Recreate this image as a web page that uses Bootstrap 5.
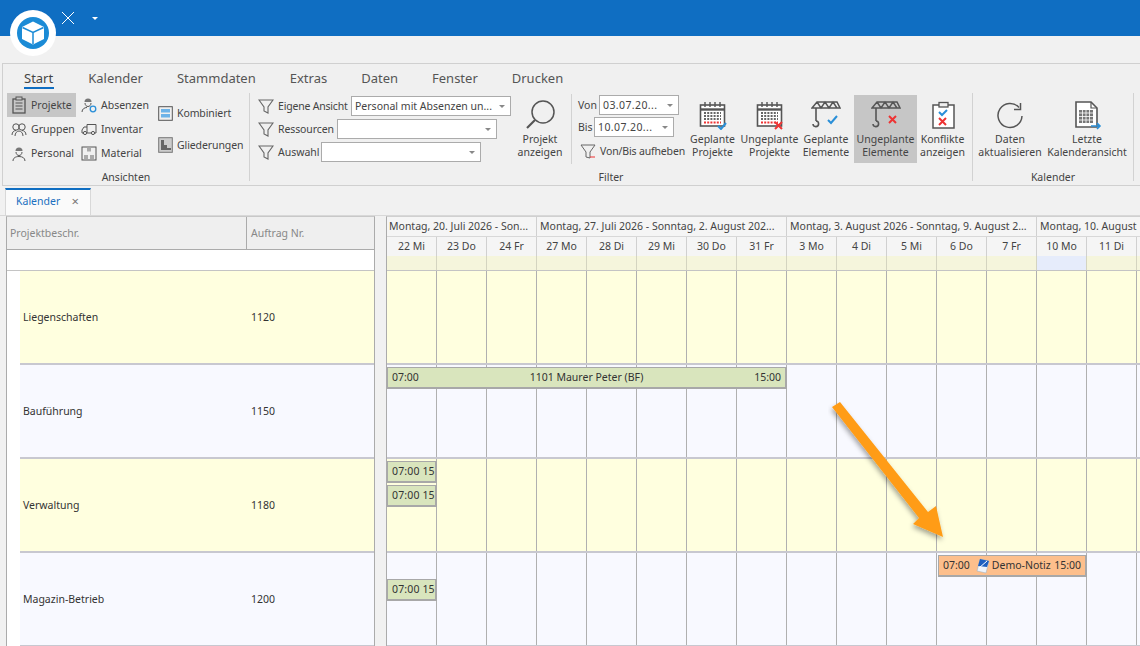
<!DOCTYPE html>
<html lang="de">
<head>
<meta charset="UTF-8">
<title>Kalender</title>
<link href="https://cdn.jsdelivr.net/npm/bootstrap@5.3.0/dist/css/bootstrap.min.css" rel="stylesheet">
<style>
  html, body { height: 646px; overflow: hidden; }
  body { font-family: "Noto Sans", "Open Sans", sans-serif; font-size: 10.5px; line-height: 13px; color: #444; background: #f1f1f1; }
  svg { display: block; flex: none; }
  .topbar { height: 36px; background: #0f6ec2; }
  .logo-round { left: 10px; top: 10px; width: 46px; height: 46px; background: #fff; border-radius: 50%; z-index: 5; }
  .top-x { left: 61px; top: 11px; }
  .top-caret { left: 92px; top: 17px; width: 0; height: 0; border: 3px solid transparent; border-top-color: #fff; }
  .ribbon-zone { height: 150px; padding: 27px 0 0 2px; }
  .ribbon { height: 123px; border: 1px solid #d0d0d0; border-right: 0; background: #f0f0f0; }
  .rtabs { height: 29px; padding: 5px 0 0 21px; gap: 34px; font-size: 13px; line-height: 18px; color: #555; }
  .rtabs span { height: 20px; }
  .rtabs .on { border-bottom: 2px solid #0f6ec2; color: #444; padding-right: 1px; }
  .groups { height: 91px; }
  .rgroup { border-right: 1px solid #d2d2d2; height: 88px; position: relative; }
  .grp-a { width: 247px; padding-left: 4px; }
  .grp-b { width: 723px; }
  .grp-c { width: 161px; padding-left: 2px; }
  .grp-name { position: absolute; bottom: -3px; left: 0; right: 0; text-align: center; }
  .scol { width: 72px; }
  .sbtn { height: 24px; gap: 4px; padding-left: 4px; white-space: nowrap; }
  .sbtn.sel { background: #c6c6c6; margin-right: 3px; }
  .scol-b .sbtn { padding-left: 2px; }
  .scol-wide { width: 90px; margin-left: 3px; padding-top: 8px; gap: 8px; }
  .scol-wide span { letter-spacing: -.1px; }
  .filter-box { width: 262px; padding: 3px 0 0 8px; gap: 3px; }
  .frow { height: 20px; gap: 4px; white-space: nowrap; }
  .fl-1 { width: 72px; letter-spacing: -.2px; } .fl-2 { width: 58px; letter-spacing: -.1px; } .fl-3 { width: 42px; }
  .fl-von { width: 21px; } .fl-bis { width: 16px; }
  .frow .fl-1, .frow .fl-2, .frow .fl-3 { margin-right: -3px; }
  .frow .fl-von, .frow .fl-bis { margin-right: -4px; }
  .combo { height: 20px; flex: none; background: #fff; border: 1px solid #ababab; padding: 0 3px; white-space: nowrap; overflow: hidden; position: relative; width: 160px; line-height: 18px; font-size: 10.5px; }
  .combo::after { content: ""; position: absolute; right: 5px; top: 8px; border: 3px solid transparent; border-top-color: #888; }
  .combo-date { width: 80px; letter-spacing: .4px; }
  .lbtn { height: 68px; margin-top: 2px; padding-top: 5px; text-align: center; white-space: nowrap; }
  .lbtn svg { margin-bottom: 3px; }
  .lbtn.sel { background: #c6c6c6; }
  .w-anz { width: 56px; } .w-gp { width: 57px; } .w-up { width: 57px; } .w-ge { width: 56px; } .w-ue { width: 63px; } .w-ko { width: 51px; }
  .w-dat { width: 70px; } .w-let { width: 84px; }
  .sep-v { width: 1px; height: 70px; background: #d2d2d2; margin: 1px 6px 0 3px; }
  .date-box { width: 106px; gap: 2px; padding-top: 2px; }
  .rlabel-b { margin-top: 2px; }
  .rlabel-b svg { margin-left: 2px; }
  .rlabel-b span { letter-spacing: -.15px; }
  .tabbar { height: 30px; border-bottom: 1px solid #d8d8d8; padding-left: 5px; background: #f1f1f1; }
  .doc-tab { width: 86px; height: 27px; background: #fafafa; border: 1px solid #d8d8d8; border-top: 2px solid #0f6ec2; border-bottom: 0; color: #1a70c0; padding: 0 11px 2px 10px; }
  .doc-tab b { font-weight: 400; color: #777; font-size: 13px; }
  .work { height: 430px; padding-left: 6px; background: #f1f1f1; gap: 11px; }
  .left-pane { width: 369px; flex: none; border: 1px solid #ababab; border-bottom: 0; border-top-color: #c8c8c8; background: #fff; }
  .left-head { height: 33px; background: #efefef; border-bottom: 1px solid #ababab; color: #888; }
  .left-head > div:first-child { width: 240px; border-right: 1px solid #ababab; padding-left: 3px; }
  .left-head > div:last-child { padding-left: 4px; }
  .left-blank { height: 21px; border-bottom: 1px solid #c4c4c4; }
  .left-row { height: 94px; margin-left: 13px; border-bottom: 2px solid #c8c8d0; }
  .left-row > div:first-child { width: 231px; padding-left: 3px; color: #333; }
  .left-row > div:last-child { color: #333; }
  .tint-y { background: #ffffdf; }
  .tint-b { background: #f8f9ff; }
  .chart { width: 754px; border-left: 1px solid #ababab; border-top: 1px solid #d0d0d0; background: #f8f9ff; overflow: hidden; flex: none; }
  .gridline { display: grid; grid-template-columns: repeat(15, 50px) 4px; }
  .wk-row { height: 20px; background: #f5f5f5; border-bottom: 1px solid #d8d8d8; display: flex; color: #444; }
  .wk-row > div { padding-left: 2px; border-right: 1px solid #d0d0d0; white-space: nowrap; overflow: hidden; line-height: 19px; flex: none; }
  .wk-1 { width: 150px; } .wk-2, .wk-3 { width: 250px; } .wk-4 { width: 104px; border-right: 0 !important; }
  .wk-2, .wk-3, .wk-4 { padding-left: 3px !important; }
  .day-row { height: 19px; background: #f5f5f5; }
  .day-row > div { border-right: 1px solid #d0d0d0; text-align: center; line-height: 18px; }
  .strip-row { height: 15px; background: #f5f5dc; border-bottom: 1px solid #c4c4c4; }
  .strip-row > div { border-right: 1px solid #d4d4c0; }
  .strip-row .today { background: #e6ecfb; }
  .body-row { height: 94px; border-bottom: 2px solid #c8c8d0; position: relative; }
  .body-row .vcell { grid-row: 1 / 4; border-right: 1px solid #b0b0b0; }
  .bar { background: #d9e5bd; border: 1px solid #a8a8a8; border-width: 1px 2px 2px 1px; height: 22px; padding: 0 3px 0 2px; color: #333; line-height: 19px; overflow: hidden; white-space: nowrap; z-index: 1; }
  .bar-short { padding-right: 4px; letter-spacing: .15px; }
  .bar-note { background: #fdbf8c; margin-left: 1px; padding: 0 4px; }
  .note-icon { margin: 0 2px 0 6px; }
  .arrow-over { left: 828px; top: 398px; z-index: 4; }
</style>
</head>
<body class="position-relative">

<svg width="0" height="0" class="position-absolute">
  <symbol id="i-funnel" viewBox="0 0 16 16"><path d="M1 2h14L10 9v6l-4-2V9z" fill="none" stroke="#666" stroke-width="1.1"/></symbol>
  <symbol id="i-cal" viewBox="0 0 30 30">
    <rect x="2.500" y="5" width="24" height="21" fill="#fff" stroke="#555" stroke-width="1.600"/>
    <path d="M2.500 9.500h24" stroke="#555" stroke-width="2.400"/>
    <path d="M7 2v5M12 2v5M17 2v5M22 2v5" stroke="#555" stroke-width="1.400"/>
    <path d="M6 13h17M6 16h17M6 19h17" stroke="#666" stroke-width="1.800" stroke-dasharray="2 1.200"/>
    <path d="M6 22.500h17" stroke="#e33" stroke-width="1.800" stroke-dasharray="2 1.200"/>
  </symbol>
  <symbol id="i-crane" viewBox="0 0 30 30">
    <path d="M1 8 6 2h20l3 6zM6 2l4 6 4-6 4 6 4-6 4 6" fill="none" stroke="#555" stroke-width="1.500"/>
    <path d="M5 8v13" stroke="#555" stroke-width="1.600"/>
    <path d="M5 21a2.800 2.800 0 1 1-3 3" fill="none" stroke="#555" stroke-width="1.600"/>
  </symbol>
</svg>

<div class="topbar"></div>
<div class="logo-round position-absolute d-flex align-items-center justify-content-center">
  <svg width="32" height="32" viewBox="0 0 32 32">
    <circle cx="16" cy="16" r="16" fill="#1b8bd6"/>
    <path d="M16 4.500 27 10v12l-11 5.500L5 22V10z" fill="#fff"/>
    <path d="M5.500 10.500 16 15.500l10.500-5M16 15.500V27" fill="none" stroke="#1b8bd6" stroke-width="1.500"/>
  </svg>
</div>
<svg class="top-x position-absolute" width="14" height="14" viewBox="0 0 14 14"><path d="M1 1l12 12M13 1 1 13" stroke="#fff" stroke-width="1"/></svg>
<div class="top-caret position-absolute"></div>

<div class="ribbon-zone">
  <div class="ribbon">
    <div class="rtabs d-flex">
      <span class="on">Start</span><span>Kalender</span><span>Stammdaten</span><span>Extras</span><span>Daten</span><span>Fenster</span><span>Drucken</span>
    </div>
    <div class="groups d-flex">
      <!-- Ansichten -->
      <div class="rgroup grp-a d-flex">
        <div class="scol">
          <div class="sbtn sel d-flex align-items-center">
            <svg width="16" height="18" viewBox="0 0 16 18"><rect x="2" y="3" width="12" height="14" fill="none" stroke="#555" stroke-width="1.300"/><rect x="5" y="1" width="6" height="3" fill="#c6c6c6" stroke="#555"/><path d="M4.500 7h7M4.500 10h7M4.500 13h7" stroke="#555"/></svg>
            <span>Projekte</span>
          </div>
          <div class="sbtn d-flex align-items-center">
            <svg width="16" height="16" viewBox="0 0 16 16"><circle cx="5" cy="6" r="3.200" fill="none" stroke="#555"/><circle cx="11" cy="6" r="3.200" fill="none" stroke="#555"/><path d="M1 14c0-3 2-4.500 4-4.500M15 14c0-3-2-4.500-4-4.500M4 15c0-3 2-5 4-5s4 2 4 5" fill="none" stroke="#555"/></svg>
            <span>Gruppen</span>
          </div>
          <div class="sbtn d-flex align-items-center">
            <svg width="16" height="16" viewBox="0 0 16 16"><path d="M4.500 6a3.500 3.500 0 0 1 7 0z" fill="#777"/><path d="M5 7c0 2 1.300 3.500 3 3.500S11 9 11 7" fill="none" stroke="#555"/><path d="M2 16c0-3 2.500-4.500 6-4.500S14 13 14 16" fill="none" stroke="#555"/></svg>
            <span>Personal</span>
          </div>
        </div>
        <div class="scol scol-b">
          <div class="sbtn d-flex align-items-center">
            <svg width="16" height="18" viewBox="0 0 16 18"><path d="M3.500 6a3.500 3.500 0 0 1 7 0z" fill="#777"/><path d="M4 7c0 2 1.300 3.500 3 3.500S10 9 10 7" fill="none" stroke="#555"/><path d="M1 16c0-3 2.500-4.500 5-4.500" fill="none" stroke="#555"/><circle cx="12" cy="13" r="2.800" fill="none" stroke="#2a8fd8" stroke-width="1.300"/></svg>
            <span>Absenzen</span>
          </div>
          <div class="sbtn d-flex align-items-center">
            <svg width="16" height="14" viewBox="0 0 16 14"><path d="M6 2.500h9v8.500H6zM6 5H3l-2 3v3h3" fill="none" stroke="#555"/><circle cx="4" cy="11" r="1.600" fill="#f0f0f0" stroke="#555"/><circle cx="12" cy="11" r="1.600" fill="#f0f0f0" stroke="#555"/></svg>
            <span>Inventar</span>
          </div>
          <div class="sbtn d-flex align-items-center">
            <svg width="16" height="15" viewBox="0 0 16 15"><rect x="1" y="1" width="14" height="13" fill="none" stroke="#555"/><path d="M6 1.500h4v4H6zM3 9h4v4H3zM9 9h4v4H9z" fill="#aaa"/></svg>
            <span>Material</span>
          </div>
        </div>
        <div class="scol-wide d-flex flex-column">
          <div class="sbtn d-flex align-items-center">
            <svg width="15" height="15" viewBox="0 0 15 15"><rect x=".7" y=".7" width="13.600" height="13.600" fill="none" stroke="#555"/><rect x="3" y="3" width="9" height="3.500" fill="#6db3e8"/><rect x="3" y="8" width="9" height="3.500" fill="#6db3e8"/></svg>
            <span>Kombiniert</span>
          </div>
          <div class="sbtn d-flex align-items-center">
            <svg width="15" height="16" viewBox="0 0 15 16"><rect x=".7" y=".7" width="13.600" height="14.600" fill="#ccc" stroke="#777"/><path d="M3 3v10h10v-2H9V8H6V3z" fill="#666"/></svg>
            <span>Gliederungen</span>
          </div>
        </div>
        <div class="grp-name">Ansichten</div>
      </div>

      <!-- Filter -->
      <div class="rgroup grp-b d-flex">
        <div class="filter-box d-flex flex-column">
          <div class="frow d-flex align-items-center"><svg width="16" height="16"><use href="#i-funnel"/></svg><span class="fl-1">Eigene Ansicht</span><div class="combo">Personal mit Absenzen un...</div></div>
          <div class="frow d-flex align-items-center"><svg width="16" height="16"><use href="#i-funnel"/></svg><span class="fl-2">Ressourcen</span><div class="combo"></div></div>
          <div class="frow d-flex align-items-center"><svg width="16" height="16"><use href="#i-funnel"/></svg><span class="fl-3">Auswahl</span><div class="combo"></div></div>
        </div>
        <div class="lbtn w-anz d-flex flex-column align-items-center">
          <svg width="30" height="30" viewBox="0 0 30 30"><circle cx="18" cy="12" r="11" fill="none" stroke="#555" stroke-width="1.500"/><path d="M10 20 2 28" stroke="#555" stroke-width="2.200"/></svg>
          <span>Projekt<br>anzeigen</span>
        </div>
        <div class="sep-v"></div>
        <div class="date-box d-flex flex-column">
          <div class="frow d-flex align-items-center"><span class="fl-von">Von</span><div class="combo combo-date">03.07.20...</div></div>
          <div class="frow d-flex align-items-center"><span class="fl-bis">Bis</span><div class="combo combo-date">10.07.20...</div></div>
          <div class="frow d-flex align-items-center rlabel-b">
            <svg width="16" height="16" viewBox="0 0 16 16"><path d="M1 2h14L10 9v6l-4-1V9z" fill="none" stroke="#666"/><path d="M10 14h5" stroke="#e33"/></svg>
            <span>Von/Bis aufheben</span>
          </div>
        </div>
        <div class="lbtn w-gp d-flex flex-column align-items-center">
          <svg width="30" height="30" viewBox="0 0 30 30"><use href="#i-cal"/><path d="M20 26l3 3 5-6" fill="none" stroke="#2a8fd8" stroke-width="2"/></svg>
          <span>Geplante<br>Projekte</span>
        </div>
        <div class="lbtn w-up d-flex flex-column align-items-center">
          <svg width="30" height="30" viewBox="0 0 30 30"><use href="#i-cal"/><path d="M20 22l7 7M27 22l-7 7" stroke="#e33" stroke-width="2"/></svg>
          <span>Ungeplante<br>Projekte</span>
        </div>
        <div class="lbtn w-ge d-flex flex-column align-items-center">
          <svg width="30" height="30" viewBox="0 0 30 30"><use href="#i-crane"/><path d="M17 20l3 3 6-7" fill="none" stroke="#2a8fd8" stroke-width="2"/></svg>
          <span>Geplante<br>Elemente</span>
        </div>
        <div class="lbtn w-ue sel d-flex flex-column align-items-center">
          <svg width="30" height="30" viewBox="0 0 30 30"><use href="#i-crane"/><path d="M18 16l7 7M25 16l-7 7" stroke="#e33" stroke-width="2"/></svg>
          <span>Ungeplante<br>Elemente</span>
        </div>
        <div class="lbtn w-ko d-flex flex-column align-items-center">
          <svg width="30" height="30" viewBox="0 0 30 30"><rect x="5" y="5" width="21" height="23" fill="#fff" stroke="#555" stroke-width="1.500"/><rect x="11" y="2.500" width="9" height="4.500" fill="#f0f0f0" stroke="#555" stroke-width="1.300"/><path d="M11 12l3 3 5-5" fill="none" stroke="#2a8fd8" stroke-width="2"/><path d="M11 18l7 7M18 18l-7 7" stroke="#e33" stroke-width="2"/></svg>
          <span>Konflikte<br>anzeigen</span>
        </div>
        <div class="grp-name">Filter</div>
      </div>

      <!-- Kalender -->
      <div class="rgroup grp-c d-flex">
        <div class="lbtn w-dat d-flex flex-column align-items-center">
          <svg width="30" height="30" viewBox="0 0 30 30"><path d="M24 7.500a12 12 0 1 0 3 8.500" fill="none" stroke="#555" stroke-width="1.500"/><path d="M25.500 3v6.500H19" fill="none" stroke="#555" stroke-width="1.500"/></svg>
          <span>Daten<br>aktualisieren</span>
        </div>
        <div class="lbtn w-let d-flex flex-column align-items-center">
          <svg width="30" height="30" viewBox="0 0 30 30"><path d="M4 2h15l6 6v19H4z" fill="#fff" stroke="#555" stroke-width="1.600"/><path d="M19 2v6h6" fill="none" stroke="#555" stroke-width="1.200"/><path d="M7 10h14v13H7z" fill="#777"/><path d="M7 13h14M7 16.500h14M7 20h14M10.500 10v13M14 10v13M17.500 10v13" stroke="#fff" stroke-width=".8"/><path d="M19 26h9M25 23l3 3-3 3" fill="none" stroke="#2a8fd8" stroke-width="1.600"/></svg>
          <span>Letzte<br>Kalenderansicht</span>
        </div>
        <div class="grp-name">Kalender</div>
      </div>
    </div>
  </div>
</div>

<div class="tabbar d-flex align-items-end">
  <div class="doc-tab d-flex align-items-center justify-content-between"><span>Kalender</span><b>×</b></div>
</div>

<div class="work d-flex">
  <div class="left-pane">
    <div class="left-head d-flex">
      <div class="d-flex align-items-center">Projektbeschr.</div>
      <div class="d-flex align-items-center">Auftrag Nr.</div>
    </div>
    <div class="left-blank"></div>
    <div class="left-row tint-y d-flex align-items-center"><div>Liegenschaften</div><div>1120</div></div>
    <div class="left-row tint-b d-flex align-items-center"><div>Bauführung</div><div>1150</div></div>
    <div class="left-row tint-y d-flex align-items-center"><div>Verwaltung</div><div>1180</div></div>
    <div class="left-row tint-b d-flex align-items-center"><div>Magazin-Betrieb</div><div>1200</div></div>
  </div>

  <div class="chart">
    <div class="wk-row">
      <div class="wk-1">Montag, 20. Juli 2026 - Son...</div>
      <div class="wk-2">Montag, 27. Juli 2026 - Sonntag, 2. August 202...</div>
      <div class="wk-3">Montag, 3. August 2026 - Sonntag, 9. August 2...</div>
      <div class="wk-4">Montag, 10. August</div>
    </div>
    <div class="day-row gridline" id="tage"></div>
    <div class="strip-row gridline" id="streifen"></div>
    <div class="body-row tint-y gridline" data-zeile="0"></div>
    <div class="body-row tint-b gridline" data-zeile="1"></div>
    <div class="body-row tint-y gridline" data-zeile="2"></div>
    <div class="body-row tint-b gridline" data-zeile="3"></div>
  </div>
</div>

<!-- Pfeil liegt über dem Kalender -->
<svg class="arrow-over position-absolute" width="125" height="150" viewBox="0 0 125 150">
  <defs><filter id="schatten" x="-20%" y="-20%" width="150%" height="150%"><feDropShadow dx="-1" dy="3" stdDeviation="2.500" flood-color="#000" flood-opacity=".35"/></filter></defs>
  <path d="M12 4 100 114 108 108 115 139 85 126 91 120 4 9z" fill="#ff9c17" filter="url(#schatten)"/>
</svg>

<script src="https://cdn.jsdelivr.net/npm/bootstrap@5.3.0/dist/js/bootstrap.bundle.min.js"></script>
<script>
  // Tageszellen und Termine aus Daten aufbauen
  const tage = ["22 Mi","23 Do","24 Fr","27 Mo","28 Di","29 Mi","30 Do","31 Fr","3 Mo","4 Di","5 Mi","6 Do","7 Fr","10 Mo","11 Di"];
  document.getElementById("tage").innerHTML = tage.map(t => `<div>${t}</div>`).join("");
  document.getElementById("streifen").innerHTML = tage.map(t => `<div class="${t === "10 Mo" ? "today" : ""}"></div>`).join("");

  const notizIcon = `<svg class="note-icon" width="14" height="16" viewBox="0 0 14 16"><path d="M4 1 13 3 10 15 1 13z" fill="#eef3fa" stroke="#9ab" stroke-width=".5"/><path d="M4 1 13 3 11 9 2 8z" fill="#1d5fc0"/><path d="M3 10 11 3" stroke="#fff" stroke-width="1"/></svg>`;
  const termine = [
    [],
    [{ von: 1, bis: 9, zeile: 1, cls: "px-1", html: `<div class="d-flex justify-content-between"><span>07:00</span><span>1101 Maurer Peter (BF)</span><span>15:00</span></div>` }],
    [{ von: 1, bis: 2, zeile: 1, cls: "bar-short ps-1", html: "07:00 15:00" }, { von: 1, bis: 2, zeile: 2, cls: "bar-short ps-1", html: "07:00 15:00" }],
    [{ von: 12, bis: 15, zeile: 1, cls: "bar-note", html: `<div class="d-flex align-items-center"><span>07:00</span>${notizIcon}<span>Demo-Notiz</span><span class="ms-auto">15:00</span></div>` },
     { von: 1, bis: 2, zeile: 2, cls: "bar-short ps-1", html: "07:00 15:00" }]
  ];

  document.querySelectorAll(".body-row").forEach((reihe, i) => {
    let html = tage.map((t, n) => `<div class="vcell" style="grid-column:${n + 1}"></div>`).join("");
    termine[i].forEach(b => {
      html += `<div class="bar mt-auto ${b.cls || ""}" style="grid-column:${b.von}/${b.bis};grid-row:${b.zeile}">${b.html}</div>`;
    });
    reihe.innerHTML = html;
    reihe.style.gridTemplateRows = "24px 24px 1fr";
  });
</script>
</body>
</html>
